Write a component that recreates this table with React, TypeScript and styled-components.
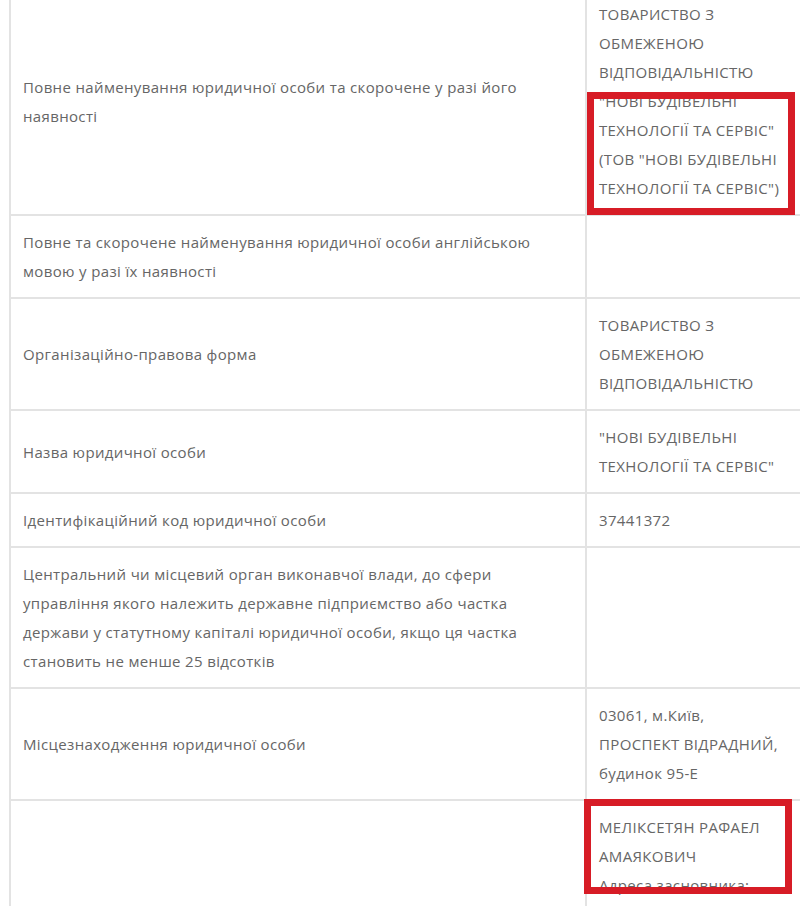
import styled, { createGlobalStyle } from "styled-components";

const GlobalStyle = createGlobalStyle`
    html, body {
        margin: 0;
        padding: 0;
        background: #fff;
    }
    body {
        font-family: "Open Sans", "Liberation Sans", sans-serif;
    }
`;

const Page = styled.div`
    width: 800px;
    height: 906px;
    overflow: hidden;
    padding-left: 9px;
    box-sizing: border-box;
`;

const Table = styled.table`
    margin-top: -14px;
    width: 830px;
    border-collapse: collapse;
    border-left: 2px solid #e3e3e3;
    table-layout: fixed;
`;

const Row = styled.tr`
    border-top: 2px solid #e3e3e3;
    border-bottom: 2px solid #e3e3e3;
`;

const Cell = styled.td<{ $side: "label" | "value" }>`
    width: ${p => (p.$side === "label" ? "550px" : "auto")};
    padding: 12px 12px 11px;
    vertical-align: middle;
    font-size: 15px;
    letter-spacing: 0.35px;
    line-height: 29px;
    color: #666;
    border-left: ${p => (p.$side === "value" ? "2px solid #e3e3e3" : "none")};
`;

const Line = styled.span`
    display: block;
    white-space: nowrap;
`;

const Highlight = styled.span<{ $top: number; $left: number; $width: number; $bottom: number }>`
    display: block;
    position: relative;
    &::after {
        content: "";
        position: absolute;
        top: ${p => p.$top}px;
        left: ${p => p.$left}px;
        width: ${p => p.$width}px;
        bottom: ${p => p.$bottom}px;
        border: 7px solid #d71c26;
        box-sizing: border-box;
        pointer-events: none;
    }
`;

type Mark = { top: number; left: number; width: number; bottom: number; lines: string[] };
type Entry = { id: string; label: string[]; value: string[]; mark?: Mark };

const entries: Entry[] = [
    {
        id: "full-name",
        label: ["Повне найменування юридичної особи та скорочене у разі його", "наявності"],
        value: ["ТОВАРИСТВО З", "ОБМЕЖЕНОЮ", "ВІДПОВІДАЛЬНІСТЮ"],
        mark: {
            top: 5, left: -12, width: 208, bottom: -12,
            lines: ["\"НОВІ БУДІВЕЛЬНІ", "ТЕХНОЛОГІЇ ТА СЕРВІС\"", "(ТОВ \"НОВІ БУДІВЕЛЬНІ", "ТЕХНОЛОГІЇ ТА СЕРВІС\")"],
        },
    },
    {
        id: "english-name",
        label: ["Повне та скорочене найменування юридичної особи англійською", "мовою у разі їх наявності"],
        value: [],
    },
    {
        id: "legal-form",
        label: ["Організаційно-правова форма"],
        value: ["ТОВАРИСТВО З", "ОБМЕЖЕНОЮ", "ВІДПОВІДАЛЬНІСТЮ"],
    },
    {
        id: "name",
        label: ["Назва юридичної особи"],
        value: ["\"НОВІ БУДІВЕЛЬНІ", "ТЕХНОЛОГІЇ ТА СЕРВІС\""],
    },
    {
        id: "code",
        label: ["Ідентифікаційний код юридичної особи"],
        value: ["37441372"],
    },
    {
        id: "authority",
        label: [
            "Центральний чи місцевий орган виконавчої влади, до сфери",
            "управління якого належить державне підприємство або частка",
            "держави у статутному капіталі юридичної особи, якщо ця частка",
            "становить не менше 25 відсотків",
        ],
        value: [],
    },
    {
        id: "address",
        label: ["Місцезнаходження юридичної особи"],
        value: ["03061, м.Київ,", "ПРОСПЕКТ ВІДРАДНИЙ,", "будинок 95-Е"],
    },
    {
        id: "founder",
        label: [],
        value: [],
        mark: {
            top: -14, left: -15, width: 208, bottom: 6,
            lines: ["МЕЛІКСЕТЯН РАФАЕЛ", "АМАЯКОВИЧ", "Адреса засновника:"],
        },
    },
];

export default function App() {
    return <>
        <GlobalStyle />
        <Page>
            <Table>
                <tbody>
                    {entries.map(({ id, label, value, mark }) => (
                        <Row key={id}>
                            <Cell $side="label">
                                {label.map(text => <Line key={text}>{text}</Line>)}
                            </Cell>
                            <Cell $side="value">
                                {value.map(text => <Line key={text}>{text}</Line>)}
                                {mark && <Highlight $top={mark.top} $left={mark.left} $width={mark.width} $bottom={mark.bottom}>
                                    {mark.lines.map(text => <Line key={text}>{text}</Line>)}
                                </Highlight>}
                            </Cell>
                        </Row>
                    ))}
                </tbody>
            </Table>
        </Page>
    </>;
}
